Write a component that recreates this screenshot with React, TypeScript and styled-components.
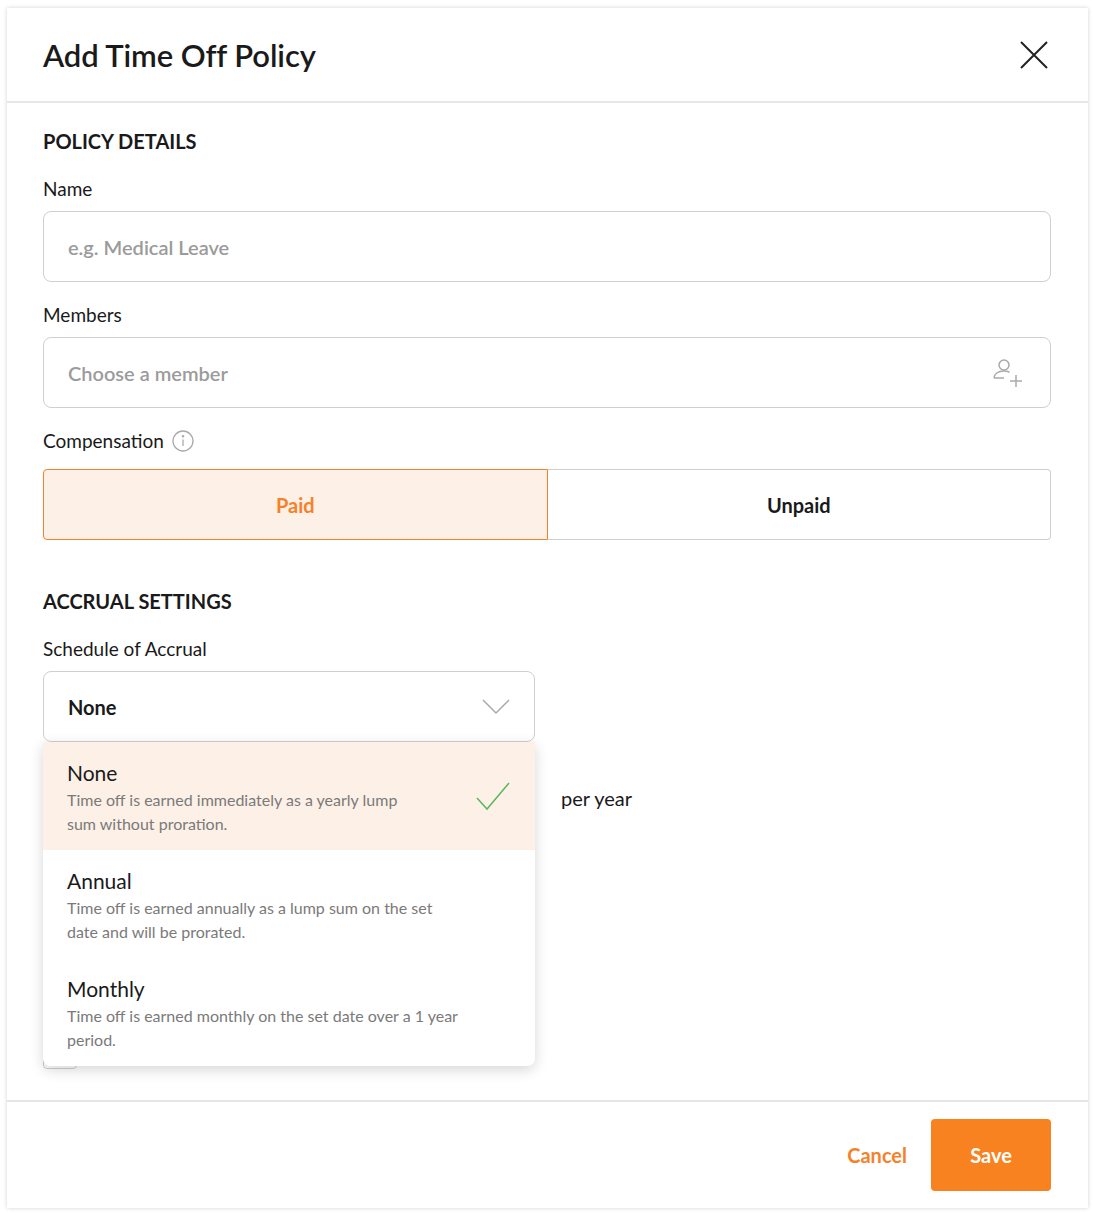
import React from "react";
import styled, { createGlobalStyle } from "styled-components";

const Global = createGlobalStyle`
  html, body { margin: 0; padding: 0; background: #fff; }
  body { font-family: Lato, "Noto Sans", sans-serif; color: #1a1a1a; }
  * { box-sizing: border-box; }
`;

const Page = styled.div`padding: 8px 7px;`;
const Modal = styled.div`
  width: 1081px; height: 1200px; background: #fff;
  box-shadow: 0 0 4px rgba(0,0,0,0.18);
  display: flex; flex-direction: column;
`;
const Header = styled.div`
  height: 95px; border-bottom: 2px solid #e6e6e6;
  display: flex; align-items: center; justify-content: space-between;
  padding: 0 40px 0 36px;
`;
const Title = styled.h1`margin: 0; font-size: 31px; font-weight: 600; letter-spacing: -0.1px;`;
const Body = styled.div`
  flex: 1; padding: 26px 37px 0 36px; display: flex; flex-direction: column; position: relative;
`;
const Section = styled.h2`margin: 0 0 24px; font-size: 20px; font-weight: 700; line-height: 24px;`;
const Label = styled.div<{ $mb?: number }>`
  font-size: 19px; line-height: 24px; margin-bottom: ${p => p.$mb ?? 10}px;
  display: flex; align-items: center; gap: 8px;
`;
const Input = styled.div<{ $w?: number; $mb?: number }>`
  height: 71px; width: ${p => (p.$w ? p.$w + "px" : "100%")};
  border: 1.5px solid #cfcfcf; border-radius: 8px;
  display: flex; align-items: center; justify-content: space-between; padding: 0 24px;
  font-size: 20px; margin-bottom: ${p => p.$mb ?? 21}px;
`;
const Placeholder = styled.span`color: #9b9b9b; font-weight: 600;`;
const Value = styled.span`color: #1a1a1a; font-weight: 700;`;
const Toggle = styled.div`display: flex; height: 71px; margin-bottom: 49px;`;
const ToggleBtn = styled.div<{ $active?: boolean }>`
  flex: 1; display: flex; align-items: center; justify-content: center;
  font-size: 20px; font-weight: 700;
  border: 1.5px solid ${p => (p.$active ? "#f5822a" : "#cfcfcf")};
  background: ${p => (p.$active ? "#fdf0e6" : "#fff")};
  color: ${p => (p.$active ? "#f5822a" : "#1a1a1a")};
  border-radius: ${p => (p.$active ? "4px 0 0 4px" : "0 4px 4px 0")};
  ${p => (!p.$active ? "border-left: none;" : "")}
`;
const Row = styled.div`display: flex; align-items: center; gap: 26px; font-size: 20px;`;
const CheckRow = styled.div`display: flex; align-items: center; gap: 14px; font-size: 20px; margin-top: 206px;`;
const Box = styled.div`width: 34px; height: 30px; border: 1.5px solid #cfcfcf; border-radius: 4px;`;

const Dropdown = styled.div`
  position: absolute; left: 36px; top: 639px; width: 492px;
  background: #fff; border-radius: 0 0 8px 8px;
  box-shadow: 0 4px 14px rgba(0,0,0,0.16); overflow: hidden;
`;
const Option = styled.div<{ $sel?: boolean }>`
  height: 108px; padding: 18px 24px 0; display: flex; justify-content: space-between;
  background: ${p => (p.$sel ? "#fdf0e6" : "#fff")};
`;
const OptTitle = styled.div`font-size: 21px; line-height: 26px; margin-bottom: 2px;`;
const OptDesc = styled.div<{ $w?: number }>`
  font-size: 16px; line-height: 24px; color: #7a7a7a; width: ${p => p.$w ?? 358}px;
`;

const Footer = styled.div`
  height: 108px; border-top: 2px solid #e6e6e6; display: flex; align-items: center;
  justify-content: flex-end; gap: 24px; padding: 0 37px 0 0;
`;
const CancelBtn = styled.button`
  border: none; background: none; color: #f5822a; font: 700 20px Lato, sans-serif; padding: 0;
`;
const SaveBtn = styled.button`
  width: 120px; height: 72px; border: none; border-radius: 4px; background: #f7821f;
  color: #fff; font: 700 20px Lato, sans-serif;
`;

export default function App() {
  return (
    <Page>
      <Global />
      <Modal>
        <Header>
          <Title>Add Time Off Policy</Title>
          <svg width="28" height="28" viewBox="0 0 28 28" stroke="#222" strokeWidth="2">
            <path d="M1 1L27 27M27 1L1 27" />
          </svg>
        </Header>
        <Body>
          <Section>POLICY DETAILS</Section>
          <Label>Name</Label>
          <Input><Placeholder>e.g. Medical Leave</Placeholder></Input>
          <Label>Members</Label>
          <Input>
            <Placeholder>Choose a member</Placeholder>
            <svg width="34" height="32" viewBox="0 0 34 32" fill="none" stroke="#aaa" strokeWidth="1.5">
              <circle cx="12" cy="8" r="5" />
              <path d="M2 21c0-4 4-7 10-7 2 0 4 .5 5.5 1.2M2 21h10" />
              <path d="M24 18v12M18 24h12" />
            </svg>
          </Input>
          <Label $mb={16}>
            Compensation
            <svg width="22" height="22" viewBox="0 0 22 22" fill="none" stroke="#aaa" strokeWidth="1.3">
              <circle cx="11" cy="11" r="10" />
              <path d="M11 9.5v6.5" />
              <circle cx="11" cy="6.3" r="0.6" fill="#aaa" />
            </svg>
          </Label>
          <Toggle>
            <ToggleBtn $active>Paid</ToggleBtn>
            <ToggleBtn>Unpaid</ToggleBtn>
          </Toggle>
          <Section>ACCRUAL SETTINGS</Section>
          <Label>Schedule of Accrual</Label>
          <Input $w={492} $mb={20}>
            <Value>None</Value>
            <svg width="28" height="16" viewBox="0 0 28 16" fill="none" stroke="#aaa" strokeWidth="1.5">
              <path d="M1 1l13 13L27 1" />
            </svg>
          </Input>
          <Row>
            <Input $w={492} $mb={0} />
            <span>per year</span>
          </Row>
          <CheckRow>
            <Box />
            <span>Carry over unused time to the next cycle</span>
          </CheckRow>
          <Dropdown>
            <Option $sel>
              <div>
                <OptTitle>None</OptTitle>
                <OptDesc>Time off is earned immediately as a yearly lump sum without proration.</OptDesc>
              </div>
              <svg width="36" height="30" viewBox="0 0 36 30" fill="none" stroke="#5cb85c" strokeWidth="1.5" style={{ marginTop: 22 }}>
                <path d="M2 16l10 11L34 1" />
              </svg>
            </Option>
            <Option>
              <div>
                <OptTitle>Annual</OptTitle>
                <OptDesc $w={368}>Time off is earned annually as a lump sum on the set date and will be prorated.</OptDesc>
              </div>
            </Option>
            <Option>
              <div>
                <OptTitle>Monthly</OptTitle>
                <OptDesc $w={420}>Time off is earned monthly on the set date over a 1 year period.</OptDesc>
              </div>
            </Option>
          </Dropdown>
        </Body>
        <Footer>
          <CancelBtn>Cancel</CancelBtn>
          <SaveBtn>Save</SaveBtn>
        </Footer>
      </Modal>
    </Page>
  );
}
